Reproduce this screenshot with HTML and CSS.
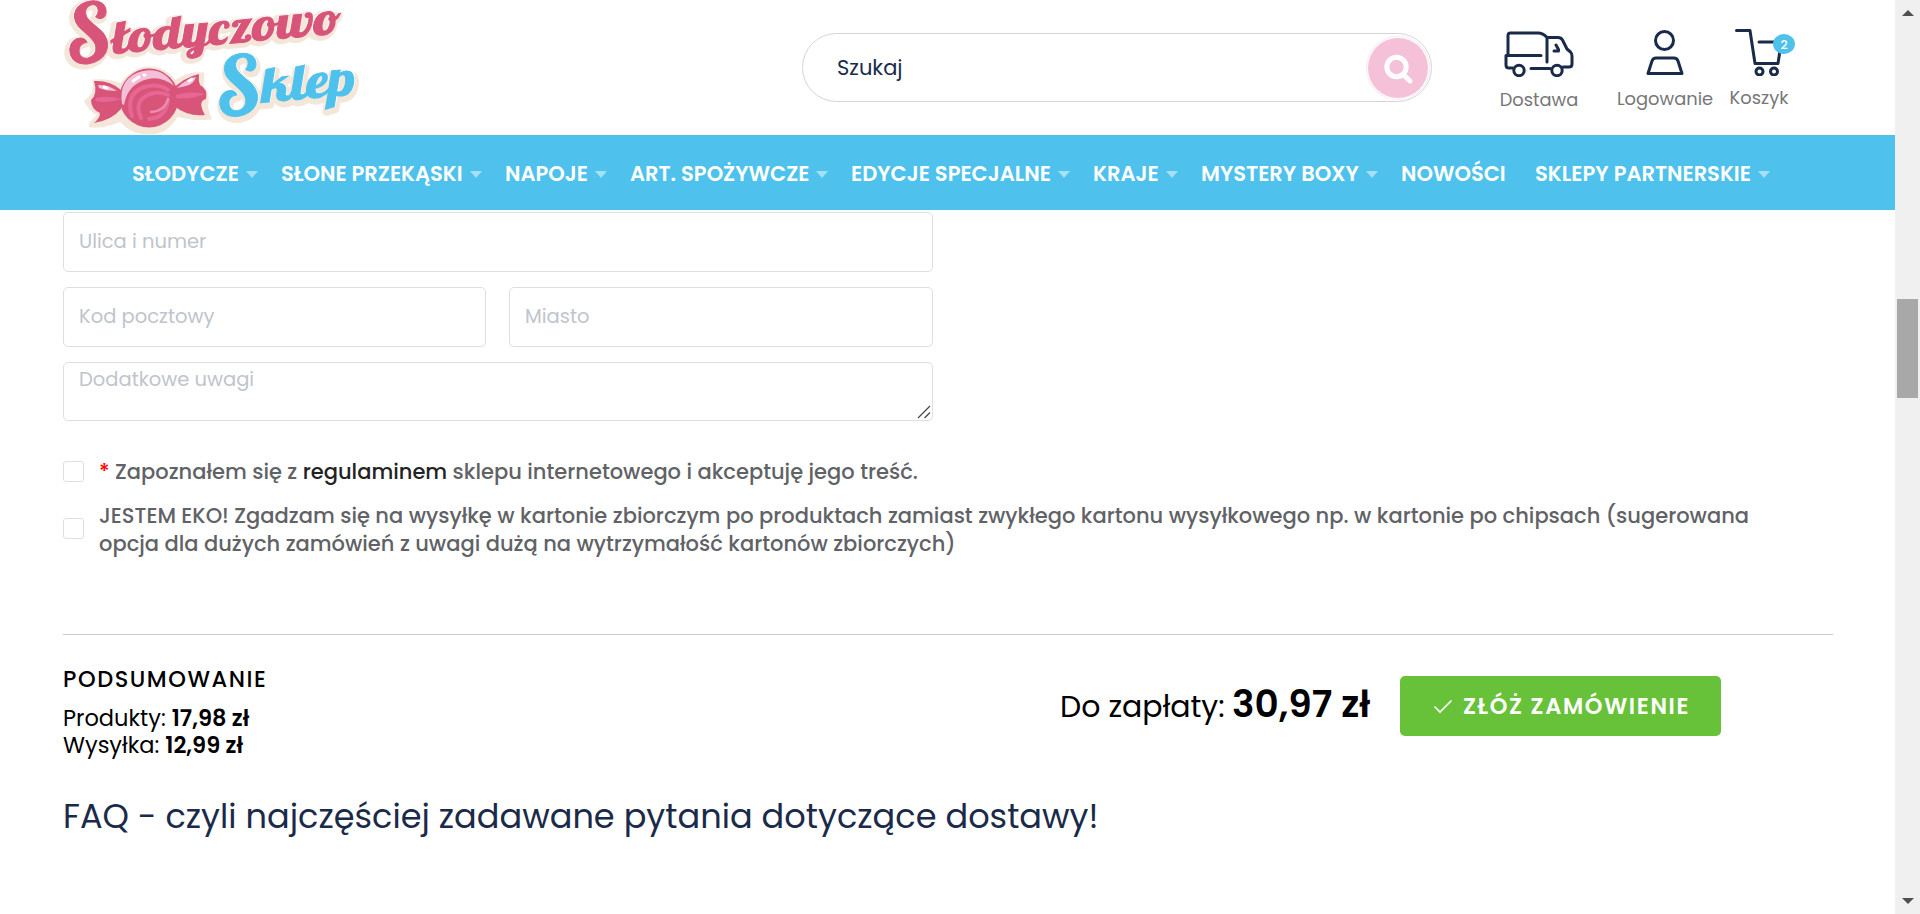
FILE: index.html
```html
<!DOCTYPE html>
<html lang="pl">
<head>
<meta charset="utf-8">
<title>Słodyczowo Sklep</title>
<link rel="stylesheet" href="styles.css">
</head>
<body>
<div class="page">
<div class="content">
<header class="header">
  <a class="logo" aria-label="Słodyczowo Sklep">
    <svg width="297" height="135" viewBox="63 0 297 135">
      <defs>
        <g id="logo-top">
          <text class="cap" x="69" y="65" transform="rotate(-8 69 65)">S</text>
          <text class="word" x="114" y="54" textLength="229" lengthAdjust="spacingAndGlyphs" transform="rotate(-5.200 114 54)">łodyczowo</text>
        </g>
        <g id="logo-bottom">
          <text class="cap" x="219" y="117.500" transform="rotate(-8 219 117.500)">S</text>
          <text class="word tall" x="263" y="102.500" textLength="94" lengthAdjust="spacingAndGlyphs" transform="rotate(-5 263 102.500)">klep</text>
        </g>
      </defs>
      <use class="shade" href="#logo-top" x="-2" y="2"/>
      <use class="shade" href="#logo-bottom" x="1" y="3"/>
      <path class="cream" d="M94 81Q110 80 121 85Q134 68 149 68Q165 68 175 82Q189 72 203 74L202 86Q208 92 207 102Q205 107 210 118Q194 120 177 115Q166 134 149 133Q131 133 121 120Q106 127 92 126Q86 127 99 115Q88 108 86 101Q96 95 94 81Z"/>
      <path class="rose" d="M94 81Q110 80 121 90V109Q112 120 94 123Q100 118 100 113Q91 109 91 100Q98 94 94 81ZM171 90Q185 77 199 74Q198 80 200 85Q208 89 206 99Q197 101 205 115Q188 117 174 106Z"/>
      <circle class="rose" cx="149" cy="98" r="29.500"/>
      <path class="blush" d="M96 98Q108 95 121 99Q108 104 95 101ZM176 95Q190 90 205 94Q190 100 176 98Z"/>
      <path class="pale" d="M122 104Q118 77 143 71Q164 67 174 86Q158 73 140 82Q127 88 124 105ZM98 85Q108 84 117 91Q106 91 99 88ZM177 88Q187 78 196 77Q194 84 186 86Z"/>
      <path class="swirl" d="M132 116Q125 94 144 87Q158 83 168 90M141 118Q133 101 150 94Q160 91 168 95M149 119Q166 118 168 100"/>
      <path class="swirl light" d="M151 112Q165 111 168 99"/>
      <path class="shine" d="M133 81L139 77M144 75L145 75M104 87L107 88M189 81L192 79"/>
      <use class="gloss" href="#logo-top" x="-0.800" y="-0.400"/>
      <use class="gloss" href="#logo-bottom" x="0.800" y="-0.600"/>
      <use class="pink" href="#logo-top"/>
      <use class="sky" href="#logo-bottom"/>
    </svg>
  </a>
  <div class="search">
    <span class="search-text">Szukaj</span>
    <span class="search-button">
      <svg width="60" height="60" viewBox="0 0 60 60"><circle cx="28.500" cy="29" r="9.700"/><path d="M35.500 37L42 43"/></svg>
    </span>
  </div>
  <nav class="tools">
    <a class="tool delivery">
      <svg width="70" height="46" viewBox="0 0 70 46"><path d="M4 23V4.500Q4 2 6.500 2H34Q39 2 43 6.500V31M37 24.500H2V34Q2 37 5 37H9M43 6.500H54Q57 6.500 58.500 9L63 18L66.500 21Q68 22.500 68 25V33Q68 36 65 36H59M27 37.500H46M52 14L54.500 18.500V20H50"/><circle cx="15" cy="39.500" r="5.200"/><circle cx="53" cy="39.500" r="5.200"/></svg>
      <span class="tool-label">Dostawa</span>
    </a>
    <a class="tool login">
      <svg width="38" height="46" viewBox="0 0 38 46"><circle cx="18.500" cy="10.500" r="9"/><path d="M2 43.500L6 31Q7 28 10 28H28Q31 28 32 31L36 43.500Z"/></svg>
      <span class="tool-label">Logowanie</span>
    </a>
    <a class="tool cart">
      <svg width="50" height="48" viewBox="0 0 50 48"><path d="M1.500 2.500H15L20 35.500H43L46 16M24 14H46"/><circle cx="24.500" cy="43.500" r="3.500"/><circle cx="39" cy="43.500" r="3.500"/></svg>
      <span class="badge">2</span>
      <span class="tool-label">Koszyk</span>
    </a>
  </nav>
</header>
<nav class="menu">
  <a class="menu-item"><span>SŁODYCZE</span><i class="caret"></i></a>
  <a class="menu-item"><span>SŁONE PRZEKĄSKI</span><i class="caret"></i></a>
  <a class="menu-item"><span>NAPOJE</span><i class="caret"></i></a>
  <a class="menu-item"><span>ART. SPOŻYWCZE</span><i class="caret"></i></a>
  <a class="menu-item"><span>EDYCJE SPECJALNE</span><i class="caret"></i></a>
  <a class="menu-item"><span>KRAJE</span><i class="caret"></i></a>
  <a class="menu-item"><span>MYSTERY BOXY</span><i class="caret"></i></a>
  <a class="menu-item"><span>NOWOŚCI</span></a>
  <a class="menu-item"><span>SKLEPY PARTNERSKIE</span><i class="caret"></i></a>
</nav>
<main class="checkout">
  <form class="form">
    <div class="field">Ulica i numer</div>
    <div class="field-row">
      <div class="field">Kod pocztowy</div>
      <div class="field">Miasto</div>
    </div>
    <div class="field notes">Dodatkowe uwagi
      <svg class="grip" width="14" height="14" viewBox="0 0 14 14"><path d="M1 13L13 1M7.500 13L13 7.500"/></svg>
    </div>
  </form>
  <label class="consent">
    <span class="box"></span>
    <span class="consent-text"><b class="required">*</b> Zapoznałem się z <a class="link">regulaminem</a> sklepu internetowego i akceptuję jego treść.</span>
  </label>
  <label class="consent eco">
    <span class="box"></span>
    <span class="consent-text">JESTEM EKO! Zgadzam się na wysyłkę w kartonie zbiorczym po produktach zamiast zwykłego kartonu wysyłkowego np. w kartonie po chipsach (sugerowana<br>opcja dla dużych zamówień z uwagi dużą na wytrzymałość kartonów zbiorczych)</span>
  </label>
  <hr class="rule">
  <section class="summary">
    <div class="costs">
      <h3 class="costs-title">PODSUMOWANIE</h3>
      <p class="cost">Produkty: <strong>17,98 zł</strong></p>
      <p class="cost">Wysyłka: <strong>12,99 zł</strong></p>
    </div>
    <div class="total"><span class="total-label">Do zapłaty:</span><strong class="total-value">30,97 zł</strong></div>
    <button class="submit" type="button">
      <svg width="20" height="16" viewBox="0 0 20 16"><path d="M1.500 8.500L7 14L18.500 2.500"/></svg>
      <span>ZŁÓŻ ZAMÓWIENIE</span>
    </button>
  </section>
  <h2 class="faq">FAQ - czyli najczęściej zadawane pytania dotyczące dostawy!</h2>
</main>
</div>
<aside class="scrollbar"><i class="arrow up"></i><i class="thumb"></i><i class="arrow down"></i></aside>
</div>
</body>
</html>
```
FILE: styles.css
```css
* { box-sizing: border-box; }
body {
  margin: 0;
  background: #fff;
  color: #000;
  font: 400 19.500px/28px Poppins, Inter, "Open Sans", sans-serif;
  overflow: hidden;
}
h2, h3, p { margin: 0; font-weight: 400; }
svg { display: block; fill: none; }
.page { display: flex; height: 914px; }
.content { flex: 1; min-width: 0; }

/* header */
.header { display: flex; height: 135px; padding-left: 63px; }
.logo { width: 297px; font-family: Lobster, Lato, sans-serif; }
.logo svg { overflow: visible; }
.cap { font-size: 80px; }
.word { font-size: 45px; }
.tall { font-size: 48px; }
.shade { fill: #f4e6d9; stroke: #f4e6d9; stroke-width: 7px; stroke-linejoin: round; }
.gloss { fill: #fff; stroke: #fff; stroke-width: 1px; }
.pink { fill: #d85479; stroke: #d85479; stroke-width: 1px; }
.sky { fill: #4ec2ec; stroke: #4ec2ec; stroke-width: 1px; }
.cream { fill: #f4e6d9; stroke: #f4e6d9; stroke-width: 3px; }
.rose { fill: #d85479; }
.blush { fill: #e66793; }
.pale { fill: #f4bfd8; }
.swirl { stroke: #e66793; stroke-width: 4px; stroke-linecap: round; }
.swirl.light { stroke: #f08bb0; stroke-width: 2.500px; }
.shine { stroke: #fff; stroke-width: 3px; stroke-linecap: round; }

.search {
  display: flex;
  align-items: center;
  justify-content: space-between;
  width: 630px;
  height: 69px;
  margin: 33px 0 0 442px;
  padding: 0 3px 0 34px;
  border: 1px solid #d5d5d5;
  border-radius: 35px;
}
.search-text { color: #1a2b49; font-size: 21px; }
.search-button { border-radius: 50%; background: #f4c1d9; box-shadow: 0 0 0 1px #fff, 0 0 0 2px #fbe8f1; }
.search-button svg { stroke: #fff; stroke-width: 5px; stroke-linecap: round; }

.tools { display: flex; flex: 1; padding-left: 68px; }
.tool { display: flex; position: relative; flex-direction: column; align-items: center; }
.tool svg { stroke: #1a2b49; stroke-width: 3px; stroke-linecap: round; stroke-linejoin: round; }
.tool-label { color: #777; font-size: 17.850px; line-height: 24px; }
.delivery { width: 78px; margin-top: 31px; }
.delivery .tool-label { margin-top: 11px; }
.login { width: 96px; margin: 30px 0 0 39px; }
.login .tool-label { margin-top: 11px; }
.cart { width: 60px; margin: 28px 0 0 16px; }
.cart svg { margin-left: 1px; }
.cart .tool-label { margin-top: 10px; }
.badge {
  position: absolute;
  top: 6px;
  left: 44px;
  width: 22px;
  height: 20px;
  border-radius: 50%;
  background: #4ec2ec;
  color: #fff;
  font-size: 12.500px;
  font-weight: 500;
  line-height: 21px;
  text-align: center;
}

/* main menu */
.menu {
  display: grid;
  grid-template-columns: 149px 224px 125px 221px 242px 108px 200px 134px 236px;
  align-items: center;
  height: 75px;
  padding: 2px 0 0 132px;
  background: #4ec2ec;
  color: #fff;
  font-size: 21px;
  font-weight: 600;
}
.menu-item { display: flex; align-items: center; gap: 7px; white-space: nowrap; }
.caret { margin-top: 2px; border: 6.500px solid transparent; border-top: 7px solid #a6e0f5; border-bottom: 0; }

/* form */
.checkout { padding: 2px 62px 0 63px; }
.form { display: grid; gap: 15px; width: 870px; }
.field-row { display: grid; grid-template-columns: 423px 1fr; gap: 23px; }
.field {
  display: flex;
  position: relative;
  align-items: center;
  height: 60px;
  padding: 0 15px 1px;
  border: 1px solid #dcdfe6;
  border-radius: 5px;
  color: #c0c4cc;
}
.notes { align-items: flex-start; height: 59px; padding-top: 3px; }
.grip { position: absolute; right: 1px; bottom: 1px; stroke: #444; stroke-width: 1.200px; }

.consent { display: flex; align-items: center; margin-top: 37px; color: #606266; font-size: 21px; font-weight: 500; line-height: 27px; }
.box { width: 21px; height: 21px; margin-right: 15px; border: 1px solid #dcdfe6; border-radius: 3px; }
.consent-text { white-space: nowrap; }
.required { color: #f00; font-weight: 500; }
.link { color: #222; }
.eco { margin-top: 16.500px; line-height: 28px; }
.eco .box { margin-bottom: 2px; }

/* order summary */
.rule { height: 1px; margin: 76.500px 0 0; border: 0; background: #ccc; }
.summary { display: flex; height: 162px; }
.costs { width: 997px; padding-top: 30px; }
.costs-title { margin-bottom: 11.500px; font-size: 22.500px; font-weight: 500; letter-spacing: 1.550px; }
.cost { font-size: 22.500px; line-height: 27px; }
.cost strong { font-weight: 600; }
.total { display: flex; align-items: baseline; width: 340px; padding-top: 49px; line-height: 40px; white-space: nowrap; }
.total-label { width: 172px; font-size: 30px; }
.total-value { font-size: 37.500px; font-weight: 600; }
.submit {
  display: flex;
  align-items: center;
  gap: 10px;
  width: 321px;
  height: 60px;
  margin-top: 41px;
  padding: 0 0 0 33px;
  border: 0;
  border-radius: 5px;
  background: #67c23a;
  color: #fff;
  font: 600 22.500px/28px Poppins, Inter, sans-serif;
  letter-spacing: 1.650px;
  white-space: nowrap;
}
.submit svg { stroke: #fff; stroke-width: 1.600px; }
.faq { color: #1a2b49; font-size: 33.600px; line-height: 40px; }

/* window scrollbar */
.scrollbar { display: flex; flex-direction: column; align-items: center; width: 25px; padding: 10px 0; background: #f0f0f0; }
.arrow { border: 6px solid transparent; }
.up { border-top: 0; border-bottom-color: #505050; }
.down { margin-top: auto; border-bottom: 0; border-top-color: #505050; }
.thumb { width: 21px; height: 99px; margin-top: 283px; background: #a8a8a8; }
```
